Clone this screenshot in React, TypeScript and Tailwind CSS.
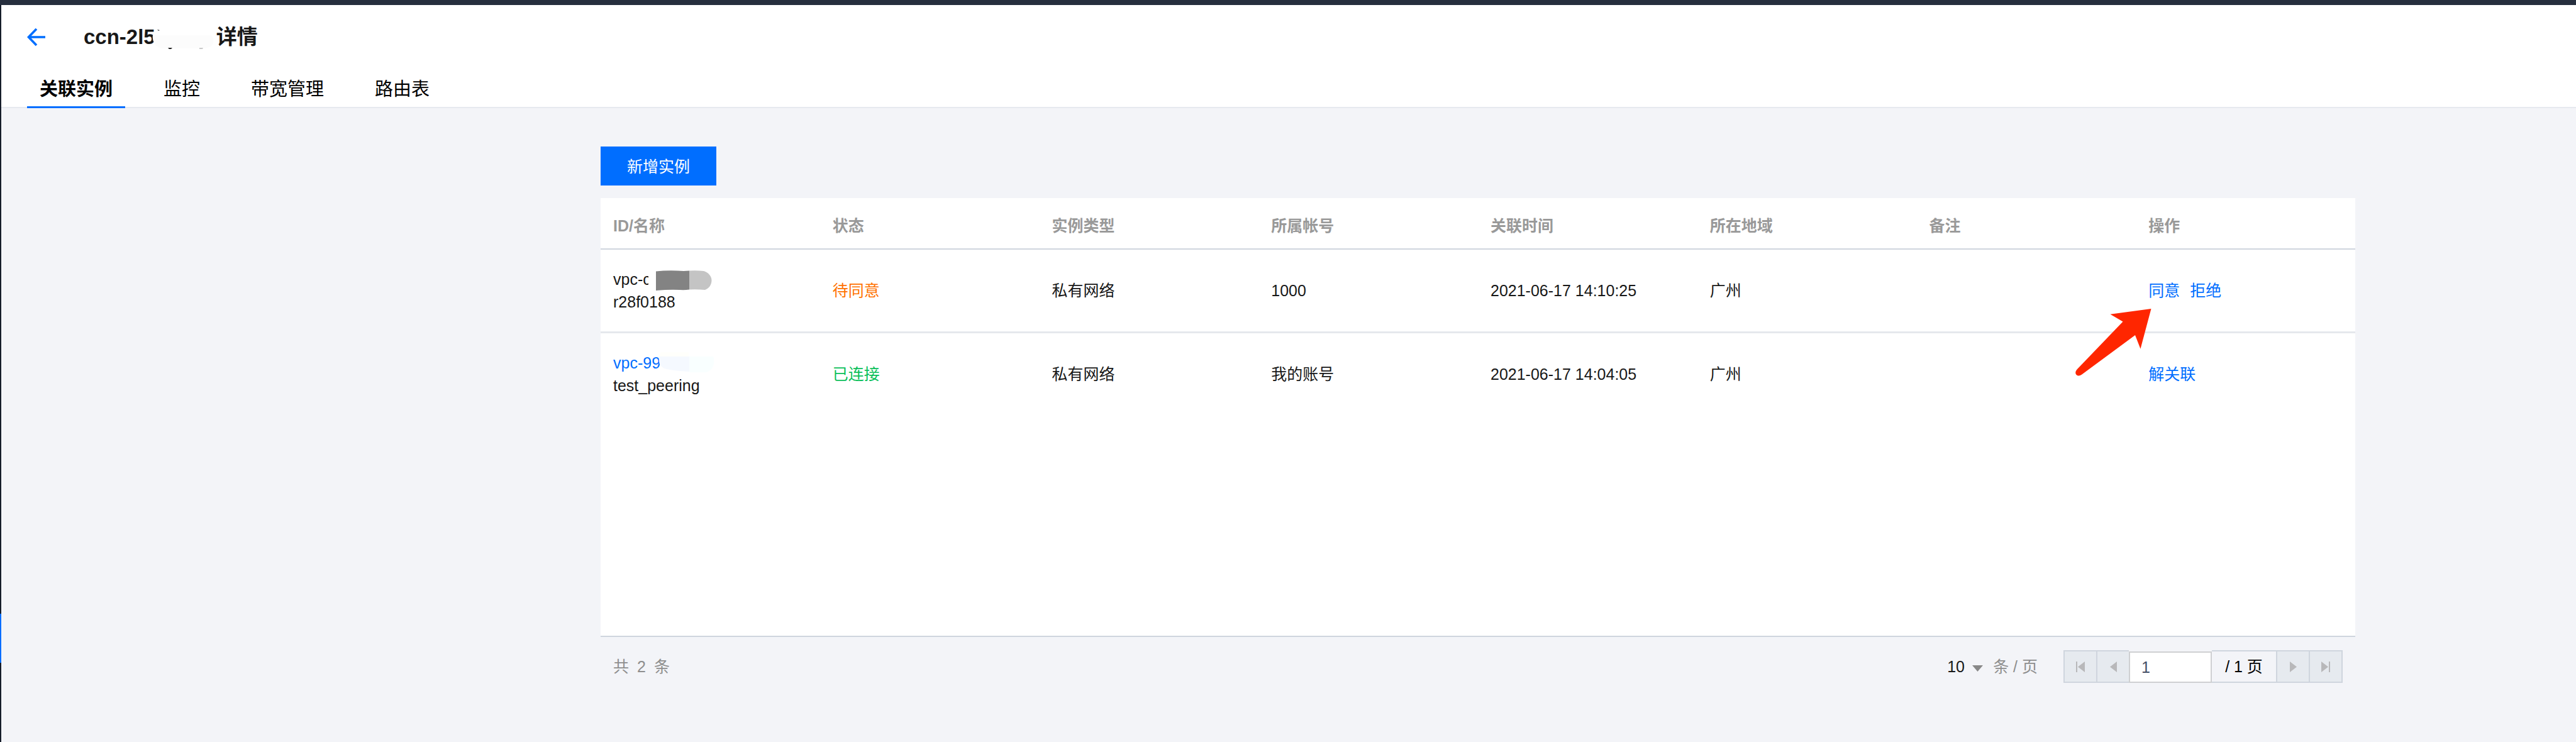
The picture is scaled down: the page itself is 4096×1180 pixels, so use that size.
import React from "react";

type Row = {
  id: React.ReactNode;
  name: string;
  status: string;
  statusClass: string;
  type: string;
  account: string;
  time: string;
  region: string;
  note: string;
  actions: string[];
  pointer?: boolean;
};

const columns = ["ID/名称", "状态", "实例类型", "所属帐号", "关联时间", "所在地域", "备注", "操作"];
const tabs = ["关联实例", "监控", "带宽管理", "路由表"];

function GreyRedaction() {
  return (
    <svg className="absolute left-[56px] top-[4px]" width="102" height="33" viewBox="0 0 102 33" aria-hidden="true">
      <rect x="0" y="0" width="13" height="33" fill="#fff" />
      <path d="M12 1.5 Q32 -0.5 56 1 L65 0.500 L65 30.500 Q58 31.500 50 31 Q35 30 12 32 Z" fill="#838383" />
      <path d="M65 0.500 Q78 0 88 1 C95 3 100.500 9 100.500 16 C100.500 23 96 29 90 31 Q78 30 65 30.500 Z" fill="#c4c4c4" />
    </svg>
  );
}

function PaleRedaction() {
  return (
    <svg className="absolute left-[72px] top-0" width="92" height="34" viewBox="0 0 92 34" aria-hidden="true">
      <path d="M0 8 L4 1 H48 V8 Z" fill="#fffffb" />
      <path d="M0.500 8 H49 V32 Q24 31 9 27 L3 22 Q1 19 1 16 Z" fill="#f5f9ff" />
      <path d="M49 8 H87 Q89 12 88 20 Q86 30 76 33 H49 Z" fill="#f9ffff" />
    </svg>
  );
}

function TitleRedaction() {
  return (
    <svg className="absolute -left-[8px] top-0" width="106" height="48" viewBox="0 0 106 48" aria-hidden="true">
      <path d="M4 21 H96 Q101 24 100 33 Q98 41 86 42 H18 Q8 39 6 33 Q3 28 4 21 Z" fill="#fcfcfc" />
      <path d="M28 41 h7 l-2 2 h-3 Z" fill="#222" />
      <path d="M78 41 h6 l-1 2 h-5 Z" fill="#c8c8c8" />
      <path d="M11 12 l4 1 l-2 1 Z" fill="#333" />
    </svg>
  );
}

const rows: Row[] = [
  {
    id: (
      <span className="relative block text-[#181818]">
        vpc-c
        <GreyRedaction />
      </span>
    ),
    name: "r28f0188",
    status: "待同意",
    statusClass: "text-[#ff7200]",
    type: "私有网络",
    account: "1000",
    time: "2021-06-17 14:10:25",
    region: "广州",
    note: "",
    actions: ["同意", "拒绝"],
    pointer: true,
  },
  {
    id: (
      <a href="#vpc" className="relative block text-[#006eff]">
        vpc-99
        <PaleRedaction />
      </a>
    ),
    name: "test_peering",
    status: "已连接",
    statusClass: "text-[#0abf5b]",
    type: "私有网络",
    account: "我的账号",
    time: "2021-06-17 14:04:05",
    region: "广州",
    note: "",
    actions: ["解关联"],
  },
];

function PointerArrow() {
  return (
    <svg className="absolute -left-[98px] top-[93px]" width="126" height="110" viewBox="0 0 126 110" aria-hidden="true">
      <path
        d="M122.5 1 L57.5 9.700 L77.500 21.500 L4.500 97.500 C0 103 3 107.500 7 107.500 C9.500 107.500 11 106.500 13 105 L97 43 L105.500 64.700 Z"
        fill="#ff2600"
      />
    </svg>
  );
}

function PageButton({ label, edges, children }: { label: string; edges: string; children: React.ReactNode }) {
  return (
    <button
      type="button"
      aria-label={label}
      className={`flex items-center justify-center border-y-2 border-[#cfd5de] bg-[#e6eaef] text-[#b8b8ba] ${edges}`}
    >
      {children}
    </button>
  );
}

export default function App() {
  return (
    <div className="flex min-h-screen flex-col bg-[#f3f4f8] font-['Liberation_Sans','Noto_Sans_CJK_SC',sans-serif] text-[25px] leading-[36px] text-[#181818]">
      <div className="h-2 bg-[#262f3e]" />
      <div className="flex flex-1">
        <div className="flex w-[2px] shrink-0 flex-col bg-[#161d2a]">
          <div className="mt-[968px] h-[78px] bg-[#006eff]" />
        </div>
        <div className="min-w-0 flex-1">
          <header className="border-b-2 border-[#e6e9ef] bg-white pl-[41px]">
            <div className="flex h-[102px] items-center">
              <a href="#back" aria-label="返回" className="mr-[60px] block">
                <svg width="30" height="30" viewBox="0 0 30 30" fill="none" stroke="#006eff" strokeWidth="3.600">
                  <path d="M15 2 L2.500 15 L15 28 M2.500 15 H29" />
                </svg>
              </a>
              <h1 className="flex text-[33px] leading-[48px] font-bold">
                <span>ccn-2l5</span>
                <span className="relative w-[97px]">
                  <TitleRedaction />
                </span>
                <span>详情</span>
              </h1>
            </div>
            <nav className="-mb-[2px] flex gap-[41px] text-[29px] leading-[53px] text-black">
              {tabs.map((tab, i) => (
                <a
                  key={tab}
                  href="#tab"
                  aria-current={i === 0 ? "page" : undefined}
                  className={`border-b-[3px] px-5 pt-[6px] ${i === 0 ? "border-[#006eff] font-bold" : "border-transparent"}`}
                >
                  {tab}
                </a>
              ))}
            </nav>
          </header>

          <main className="pt-[61px] pr-[351px] pl-[953px]">
            <button type="button" className="block h-[62px] bg-[#006eff] px-[42px] pt-[2px] text-white">
              新增实例
            </button>

            <section className="mt-5 min-h-[698px] border-b-2 border-[#cfd5de] bg-white">
              <table className="w-full table-fixed border-separate border-spacing-0 text-left">
                <thead>
                  <tr>
                    {columns.map((c) => (
                      <th key={c} scope="col" className="h-[82px] border-b-2 border-[#cfd5de] px-5 pt-[7px] font-bold text-[#999]">
                        {c}
                      </th>
                    ))}
                  </tr>
                </thead>
                <tbody>
                  {rows.map((r, i) => {
                    const cell = `h-[133px] border-b-[3px] px-5 ${i === 0 ? "border-[#e5e8ed]" : "border-transparent"}`;
                    return (
                      <tr key={r.name}>
                        <td className={cell}>
                          {r.id}
                          {r.name}
                        </td>
                        <td className={`${cell} ${r.statusClass}`}>{r.status}</td>
                        <td className={cell}>{r.type}</td>
                        <td className={cell}>{r.account}</td>
                        <td className={cell}>{r.time}</td>
                        <td className={cell}>{r.region}</td>
                        <td className={cell}>{r.note}</td>
                        <td className={`relative ${cell}`}>
                          <div className="flex gap-4">
                            {r.actions.map((a) => (
                              <a key={a} href="#action" className="text-[#006eff]">
                                {a}
                              </a>
                            ))}
                          </div>
                          {r.pointer && <PointerArrow />}
                        </td>
                      </tr>
                    );
                  })}
                </tbody>
              </table>
            </section>

            <footer className="flex items-center justify-between px-5 pt-[21px]">
              <p className="flex gap-[13px] text-[#8e8e8e]">
                <span>共</span>
                <span>2</span>
                <span>条</span>
              </p>
              <div className="flex items-center">
                <div className="flex items-center">
                  <select
                    id="page-size"
                    aria-label="每页条数"
                    className="w-10 appearance-none bg-transparent text-[25px] leading-[36px]"
                    defaultValue="10"
                  >
                    <option>10</option>
                    <option>20</option>
                    <option>50</option>
                  </select>
                  <svg width="17" height="10" viewBox="0 0 17 10" className="mt-[6px]" aria-hidden="true">
                    <path d="M0 0 H17 L8.500 10 Z" fill="#888" />
                  </svg>
                  <label htmlFor="page-size" className="ml-4 text-[#8e8e8e]">
                    条 / 页
                  </label>
                </div>
                <div className="ml-[41px] flex h-[52px]">
                  <PageButton label="首页" edges="w-[54px] border-x-2">
                    <svg width="14" height="17" viewBox="0 0 14 17" fill="currentColor">
                      <path d="M0 0 H2 V17 H0 Z M14 0 V17 L3 8.500 Z" />
                    </svg>
                  </PageButton>
                  <PageButton label="上一页" edges="w-[50px]">
                    <svg width="11" height="17" viewBox="0 0 11 17" fill="currentColor">
                      <path d="M11 0 V17 L0 8.500 Z" />
                    </svg>
                  </PageButton>
                  <input
                    aria-label="页码"
                    defaultValue="1"
                    className="mt-[2px] w-[132px] border-2 border-[#cfd0d2] bg-white px-[18px] text-[#444f66]"
                  />
                  <span className="flex w-[102px] items-center justify-center border-y-2 border-[#cfd5de] text-black">
                    / 1 页
                  </span>
                  <PageButton label="下一页" edges="w-[52px] border-l-2">
                    <svg width="11" height="17" viewBox="0 0 11 17" fill="currentColor">
                      <path d="M0 0 V17 L11 8.500 Z" />
                    </svg>
                  </PageButton>
                  <PageButton label="末页" edges="w-[54px] border-x-2">
                    <svg width="14" height="17" viewBox="0 0 14 17" fill="currentColor">
                      <path d="M12 0 H14 V17 H12 Z M0 0 V17 L11 8.500 Z" />
                    </svg>
                  </PageButton>
                </div>
              </div>
            </footer>
          </main>
        </div>
      </div>
    </div>
  );
}
